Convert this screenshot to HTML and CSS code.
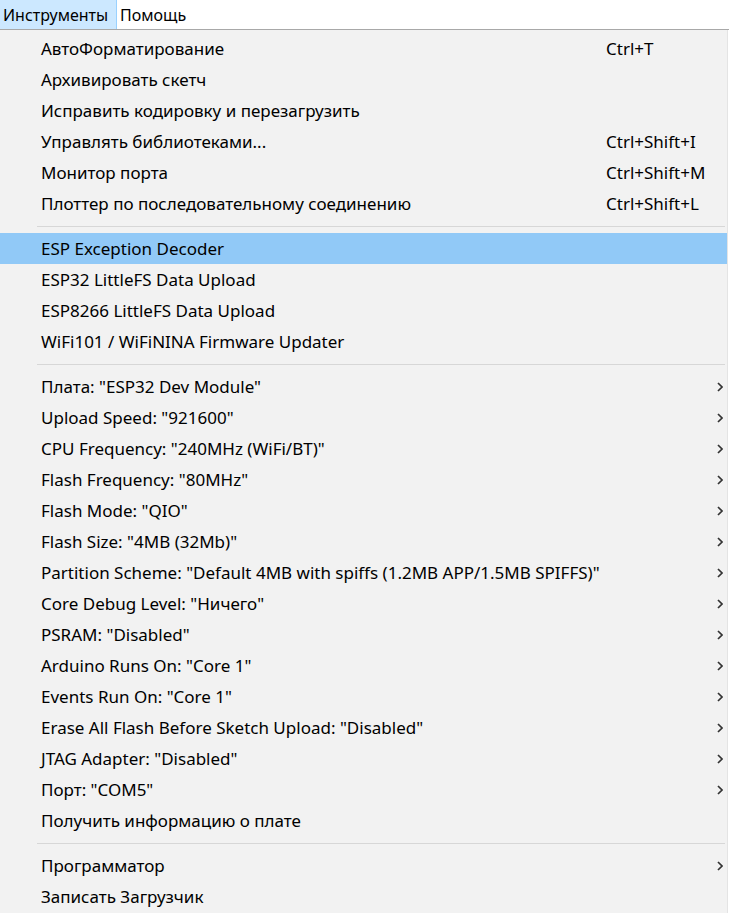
FILE: index.html
```html
<!DOCTYPE html>
<html lang="ru">
<head>
<meta charset="utf-8">
<link rel="stylesheet" href="styles.css">
</head>
<body>
<div class="menubar">
  <div class="top-item active">Инструменты</div>
  <div class="top-item">Помощь</div>
</div>
<div class="menu">
  <div class="item"><span class="label">АвтоФорматирование</span><span class="key">Ctrl+T</span></div>
  <div class="item"><span class="label">Архивировать скетч</span></div>
  <div class="item"><span class="label">Исправить кодировку и перезагрузить</span></div>
  <div class="item"><span class="label">Управлять библиотеками...</span><span class="key">Ctrl+Shift+I</span></div>
  <div class="item"><span class="label">Монитор порта</span><span class="key">Ctrl+Shift+M</span></div>
  <div class="item"><span class="label">Плоттер по последовательному соединению</span><span class="key">Ctrl+Shift+L</span></div>
  <div class="sep"></div>
  <div class="item hl"><span class="label">ESP Exception Decoder</span></div>
  <div class="item"><span class="label">ESP32 LittleFS Data Upload</span></div>
  <div class="item"><span class="label">ESP8266 LittleFS Data Upload</span></div>
  <div class="item"><span class="label">WiFi101 / WiFiNINA Firmware Updater</span></div>
  <div class="sep"></div>
  <div class="item sub"><span class="label">Плата: "ESP32 Dev Module"</span><svg class="chev" viewBox="0 0 6 10"><polyline points="1,1 5,5 1,9"/></svg></div>
  <div class="item sub"><span class="label">Upload Speed: "921600"</span><svg class="chev" viewBox="0 0 6 10"><polyline points="1,1 5,5 1,9"/></svg></div>
  <div class="item sub"><span class="label">CPU Frequency: "240MHz (WiFi/BT)"</span><svg class="chev" viewBox="0 0 6 10"><polyline points="1,1 5,5 1,9"/></svg></div>
  <div class="item sub"><span class="label">Flash Frequency: "80MHz"</span><svg class="chev" viewBox="0 0 6 10"><polyline points="1,1 5,5 1,9"/></svg></div>
  <div class="item sub"><span class="label">Flash Mode: "QIO"</span><svg class="chev" viewBox="0 0 6 10"><polyline points="1,1 5,5 1,9"/></svg></div>
  <div class="item sub"><span class="label">Flash Size: "4MB (32Mb)"</span><svg class="chev" viewBox="0 0 6 10"><polyline points="1,1 5,5 1,9"/></svg></div>
  <div class="item sub"><span class="label">Partition Scheme: "Default 4MB with spiffs (1.2MB APP/1.5MB SPIFFS)"</span><svg class="chev" viewBox="0 0 6 10"><polyline points="1,1 5,5 1,9"/></svg></div>
  <div class="item sub"><span class="label">Core Debug Level: "Ничего"</span><svg class="chev" viewBox="0 0 6 10"><polyline points="1,1 5,5 1,9"/></svg></div>
  <div class="item sub"><span class="label">PSRAM: "Disabled"</span><svg class="chev" viewBox="0 0 6 10"><polyline points="1,1 5,5 1,9"/></svg></div>
  <div class="item sub"><span class="label">Arduino Runs On: "Core 1"</span><svg class="chev" viewBox="0 0 6 10"><polyline points="1,1 5,5 1,9"/></svg></div>
  <div class="item sub"><span class="label">Events Run On: "Core 1"</span><svg class="chev" viewBox="0 0 6 10"><polyline points="1,1 5,5 1,9"/></svg></div>
  <div class="item sub"><span class="label">Erase All Flash Before Sketch Upload: "Disabled"</span><svg class="chev" viewBox="0 0 6 10"><polyline points="1,1 5,5 1,9"/></svg></div>
  <div class="item sub"><span class="label">JTAG Adapter: "Disabled"</span><svg class="chev" viewBox="0 0 6 10"><polyline points="1,1 5,5 1,9"/></svg></div>
  <div class="item sub"><span class="label">Порт: "COM5"</span><svg class="chev" viewBox="0 0 6 10"><polyline points="1,1 5,5 1,9"/></svg></div>
  <div class="item"><span class="label">Получить информацию о плате</span></div>
  <div class="sep"></div>
  <div class="item sub"><span class="label">Программатор</span><svg class="chev" viewBox="0 0 6 10"><polyline points="1,1 5,5 1,9"/></svg></div>
  <div class="item"><span class="label">Записать Загрузчик</span></div>
</div>
</body>
</html>
```
FILE: styles.css
```css
html, body {
  margin: 0;
  padding: 0;
  background: #ffffff;
  overflow: hidden;
}
body {
  width: 729px;
  height: 913px;
  font-family: "Noto Sans", "Open Sans", sans-serif;
  font-size: 17px;
  color: #000;
}
.menubar {
  display: flex;
  height: 29px;
  background: #ffffff;
  border-bottom: 1px solid #a8a8a8;
  font-size: 16px;
}
.top-item {
  display: flex;
  align-items: center;
  padding: 0 6px 0 3px;
  box-sizing: border-box;
  height: 29px;
}
.top-item.active {
  background: #cce8ff;
  border-right: 1px solid #99d1ff;
  width: 117px;
}
.menu {
  width: 728px;
  box-sizing: border-box;
  background: #f2f2f2;
  border-right: 1px solid #e4e4e4;
  padding: 3px 0 4px 0;
  height: 883px;
}
.item {
  display: flex;
  align-items: center;
  height: 31px;
  padding-left: 41px;
  padding-right: 4px;
  color: #000;
}
.item .label {
  flex: 1;
  white-space: nowrap;
}
.item .key {
  width: 117px;
  white-space: nowrap;
}
.item.hl {
  background: #91c9f7;
}
.chev {
  width: 6px;
  height: 10px;
  fill: none;
  stroke: #333333;
  stroke-width: 1.7;
}
.sep {
  height: 14px;
  display: flex;
  align-items: center;
  padding-left: 37px;
  padding-right: 2px;
}
.sep::before {
  content: "";
  flex: 1;
  height: 1px;
  background: #d7d7d7;
}
```
